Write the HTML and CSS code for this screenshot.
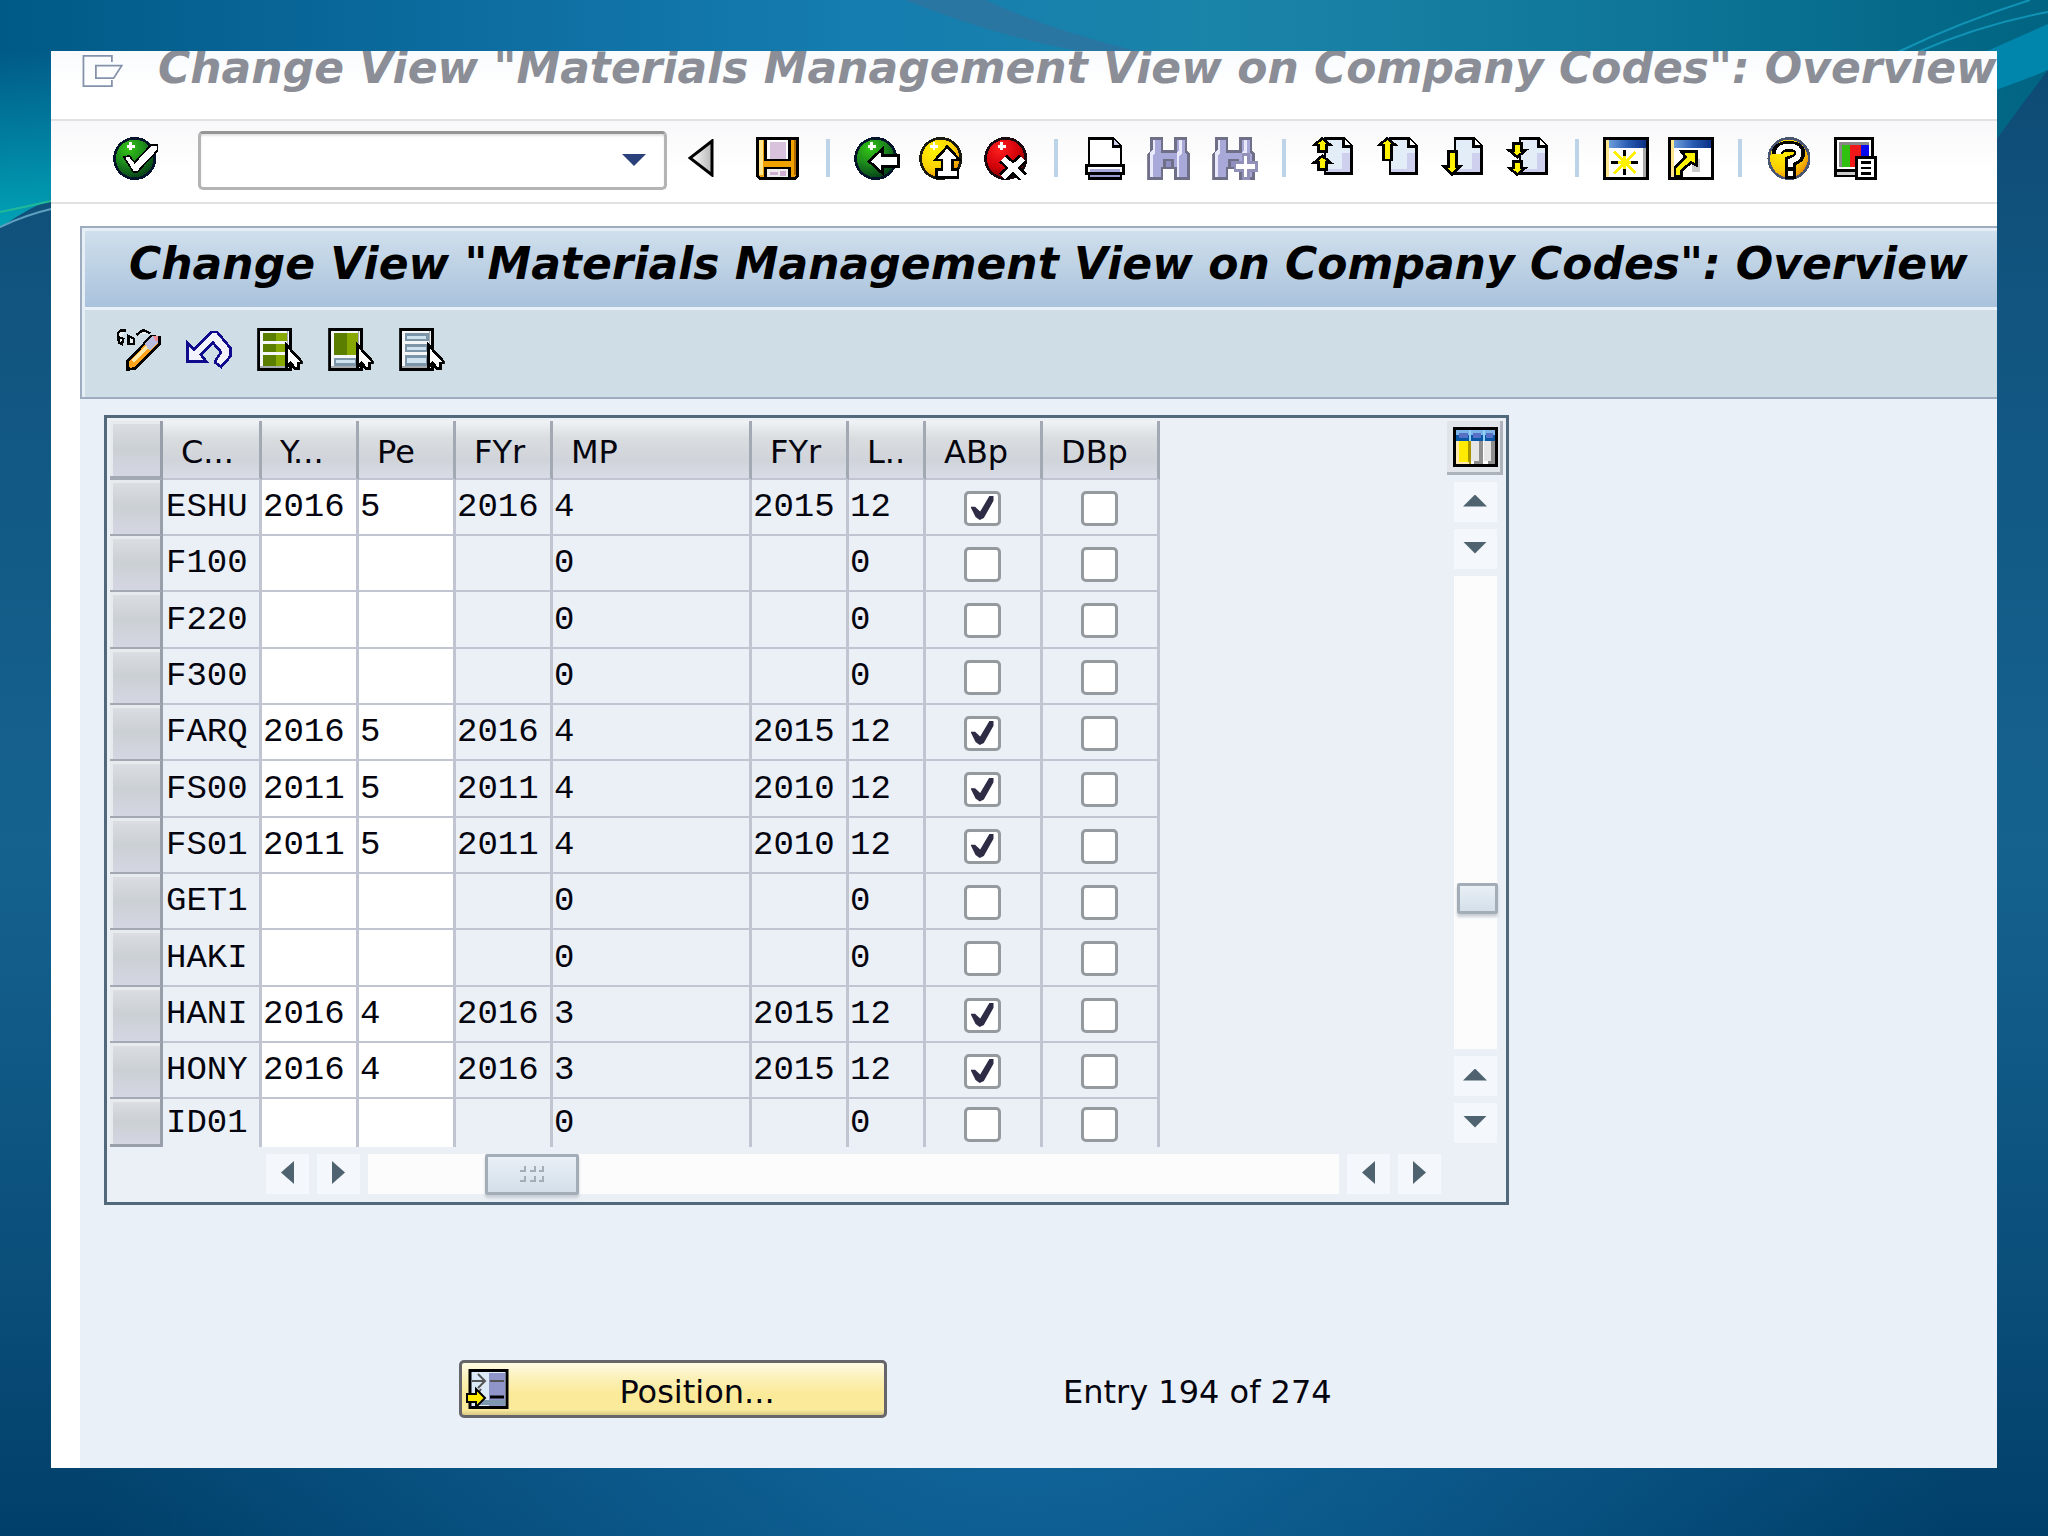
FILE: index.html
```html
<!DOCTYPE html>
<html lang="en">
<head>
<meta charset="utf-8">
<title>Change View "Materials Management View on Company Codes": Overview</title>
<link rel="stylesheet" href="styles.css">
</head>
<body>
<svg class="backdrop" viewBox="0 0 2048 1536" preserveAspectRatio="none" aria-hidden="true">
  <defs>
    <linearGradient id="sky" x1="0" y1="0" x2="1" y2="0"><stop offset="0" stop-color="#005a87"/><stop offset=".25" stop-color="#0e6ea2"/><stop offset=".42" stop-color="#157db0"/><stop offset=".6" stop-color="#1a84a8"/><stop offset=".8" stop-color="#0f7699"/><stop offset="1" stop-color="#006482"/></linearGradient>
    <linearGradient id="teal" gradientUnits="userSpaceOnUse" x1="0" y1="52" x2="0" y2="228"><stop offset="0" stop-color="#00a3b6" stop-opacity="0"/><stop offset="1" stop-color="#00a3b6"/></linearGradient>
    <linearGradient id="sea" x1="0" y1="0" x2="0" y2="1"><stop offset="0" stop-color="#0d4870"/><stop offset=".2" stop-color="#115580"/><stop offset=".55" stop-color="#15628f"/><stop offset=".85" stop-color="#0a4d79"/><stop offset="1" stop-color="#003f69"/></linearGradient>
    <radialGradient id="floor" gradientUnits="userSpaceOnUse" cx="1024" cy="1300" r="960"><stop offset="0" stop-color="#1269a0"/><stop offset="1" stop-color="#1269a0" stop-opacity="0"/></radialGradient>
  </defs>
  <rect width="2048" height="1536" fill="url(#sea)"/>
  <rect y="300" width="2048" height="1236" fill="url(#floor)"/>
  <path d="M0 0H2048V70Q2010 120 1960 190H60Q30 200 0 228Z" fill="url(#sky)"/>
  <path d="M0 52H60V196Q30 206 0 228Z" fill="url(#teal)"/>
  <path d="M905 0H985Q1050 30 1140 52H1085Q1000 38 905 0Z" fill="#2a76a2"/>
  <path d="M2048 24Q2000 45 1985 52V100L1996 90Q2025 80 2048 70Z" fill="#0086ac"/>
  <g fill="none">
    <path d="M0 212Q25 207 55 200" stroke="#22b999" stroke-width="2"/>
    <path d="M0 227Q25 215 55 208" stroke="#5e9fc0" stroke-width="2"/>
    <path d="M1898 52Q1960 22 2030 0M1918 52Q1980 25 2048 12" stroke="#1093b5" stroke-width="2"/>
  </g>
</svg>

<!-- Pixel icons, drawn on a 17 x 16 grid -->
<svg class="sprite" aria-hidden="true">
  <defs>
    <radialGradient id="g-green" cx=".35" cy=".25" r=".8"><stop offset="0" stop-color="#34c414"/><stop offset=".45" stop-color="#1e8f1c"/><stop offset="1" stop-color="#033a17"/></radialGradient>
    <radialGradient id="g-yellow" cx=".35" cy=".3" r=".8"><stop offset="0" stop-color="#fff200"/><stop offset=".6" stop-color="#fbd000"/><stop offset="1" stop-color="#e87800"/></radialGradient>
    <radialGradient id="g-red" cx=".35" cy=".25" r=".8"><stop offset="0" stop-color="#ff2020"/><stop offset=".6" stop-color="#d00008"/><stop offset="1" stop-color="#700000"/></radialGradient>
    <linearGradient id="g-blue"><stop offset="0" stop-color="#6fa0dc"/><stop offset=".5" stop-color="#2a5fb4"/><stop offset="1" stop-color="#0a2f86"/></linearGradient>
    <linearGradient id="g-grey"><stop offset="0" stop-color="#fff"/><stop offset="1" stop-color="#b8b8b8"/></linearGradient>
  </defs>
  <symbol id="page" viewBox="0 0 17 16"><path d="M5.500.5h7l3 3v10h-10z" fill="#e2edf7" stroke="#000"/><path d="M6 12h6V6h3v7H6z" fill="#cfd0ee"/><path d="M12.500.5v3h3" fill="#fff" stroke="#000"/></symbol>
  <symbol id="cursor" viewBox="0 0 17 16"><path d="M11 6.500v8l1.500-1.500 1.500 2h1.500v-2h1.500z" fill="#fff" stroke="#000"/></symbol>
  <symbol id="sheet" viewBox="0 0 17 16"><path d="M.5.5h12v15h-12z" fill="#f4f6f7" stroke="#000"/><path d="M11.500 1v14H1v-1h10V1z" fill="#a4aab0"/></symbol>
  <symbol id="binoc" viewBox="0 0 17 16"><path d="M1.500.5h4v5h5v-5h4v5l1 1v9h-5v-4h-5v4h-5v-9l1-1z" fill="#a9a9d9" stroke="#706f88"/><path d="M2 1h1v5l-1 1v8H1V6l1-1zM12 1h1v5l-1 1v8h-1V6l1-1z" fill="#e9e9fb"/><path d="M6.500 8.500h3v3h-3z" fill="#8f8fc4" stroke="#706f88"/></symbol>
</svg>

<main class="window">
  <div class="caption">
    <svg class="exit-icon" viewBox="0 0 46 36" aria-hidden="true"><path d="M33 8V1H1v34h32v-7M15 12h29l-9 14H15zM15 12v14" fill="none" stroke="#8492ab" stroke-width="2"/></svg>
    <span class="heading muted">Change View "Materials Management View on Company Codes": Overview</span>
  </div>

  <nav class="toolbar" aria-label="Standard toolbar">
    <button class="icon ok" aria-label="Enter"><svg viewBox="0 0 17 16"><ellipse cx="8" cy="8" rx="7.500" ry="7.500" fill="url(#g-green)" stroke="#04142b"/><path d="M5 3h1V2h1v1h1v1H7v1H6V4H5z" fill="#fff"/><path d="M4 7.500l2-.5 2 2.500L14 3h2.500v2L9 13H7.500z" fill="#fff" stroke="#000" stroke-width=".6"/></svg></button>
    <div class="command">
      <input type="text" aria-label="Command">
      <button aria-label="Command history"><i class="tri down navy"></i></button>
    </div>
    <button class="back" aria-label="Collapse command field"><svg viewBox="0 0 26 38"><path d="M24 2v34L2 19z" fill="url(#g-grey)" stroke="#000" stroke-width="3"/></svg></button>
    <button class="icon" aria-label="Save"><svg viewBox="0 0 17 16"><path d="M.5.5h15v14l-1 1h-13l-1-1z" fill="#f0a200" stroke="#000"/><path d="M1 1h1.500v13H1z" fill="#ffe58c"/><path d="M14 1h1v13h-1z" fill="#b06a00"/><path d="M3.500.5h9v8h-9z" fill="#fff" stroke="#000"/><path d="M5 2h6v6H5z" fill="#d8c2dc"/><path d="M3.500 11.500h9v4h-9z" fill="#eee" stroke="#000"/><path d="M5 13h3v1H5zM9 12.500h2v2H9z" fill="#cfaed2"/></svg></button>
    <span class="sep"></span>
    <div class="group">
      <button class="icon" aria-label="Back"><svg viewBox="0 0 17 16"><circle cx="8" cy="8" r="7.500" fill="url(#g-green)" stroke="#04142b"/><path d="M5 3h1V2h1v1h1v1H7v1H6V4H5z" fill="#fff"/><path d="M5.500 9l5-4.500v2.500h6v4h-6v2.500z" fill="#fff" stroke="#000"/></svg></button>
      <button class="icon" aria-label="Exit"><svg viewBox="0 0 17 16"><circle cx="8" cy="8" r="7.500" fill="url(#g-yellow)" stroke="#1b1a10"/><path d="M4 3h1V2h1v1h1v1H6v1H5V4H4z" fill="#fff"/><path d="M10.500 3.500l4.500 5h-2.500v3.500h2v3h-8v-3h2V8.500H6z" fill="#fff" stroke="#000"/></svg></button>
      <button class="icon" aria-label="Cancel"><svg viewBox="0 0 17 16"><circle cx="8" cy="8" r="7.500" fill="url(#g-red)" stroke="#1b0a10"/><path d="M5 3h1V2h1v1h1v1H7v1H6V4H5z" fill="#fff"/><path d="M7 8l7.500 7M14.500 8L7 15" stroke="#000" stroke-width="4"/><path d="M7 8l7.500 7M14.500 8L7 15" stroke="#fff" stroke-width="2.200"/></svg></button>
    </div>
    <span class="sep"></span>
    <div class="group">
      <button class="icon" aria-label="Print"><svg viewBox="0 0 17 16"><path d="M2.500 10.500v-10h9l3 3v7" fill="#fff" stroke="#000"/><path d="M11.500.5v3h3" fill="#cfd0ee" stroke="#000"/><path d="M1.500 10.500h14v3h-14z" fill="#fff" stroke="#000"/><path d="M3 12h11v1H3z" fill="#a9a9d9"/><path d="M2.500 13.500h12v2h-12z" fill="#9c9cd0" stroke="#000"/></svg></button>
      <button class="icon" aria-label="Find"><svg viewBox="0 0 17 16"><use href="#binoc"/></svg></button>
      <button class="icon" aria-label="Find next"><svg viewBox="0 0 17 16"><use href="#binoc"/><path d="M11.500 6.500h2v3h3v3h-3v3h-2v-3h-3v-3h3z" fill="#fff" stroke="#9090b8"/></svg></button>
    </div>
    <span class="sep"></span>
    <div class="group">
      <button class="icon" aria-label="First page"><svg viewBox="0 0 17 16"><use href="#page"/><path d="M4.500.5l3 2.500H6v2.500H3V3H1.500zM4.500 7l3 2.500H6V12H3V9.500H1.500z" fill="#fff200" stroke="#000"/></svg></button>
      <button class="icon" aria-label="Previous page"><svg viewBox="0 0 17 16"><use href="#page"/><path d="M4.500.5l3 2.500H6v5.500H3V3H1.500z" fill="#fff200" stroke="#000"/></svg></button>
      <button class="icon" aria-label="Next page"><svg viewBox="0 0 17 16"><use href="#page"/><path d="M4.500 14l3-3H6V5.500H3V11H1.500z" fill="#fff200" stroke="#000"/></svg></button>
      <button class="icon" aria-label="Last page"><svg viewBox="0 0 17 16"><use href="#page"/><path d="M4.500 7.500l3-2.500H6V2.500H3V5H1.500zM4.500 14l3-2.500H6V9H3v2.500H1.500z" fill="#fff200" stroke="#000"/></svg></button>
    </div>
    <span class="sep"></span>
    <div class="group">
      <button class="icon" aria-label="New session"><svg viewBox="0 0 17 16"><path d="M.5.5h16v15H.5z" fill="#fff" stroke="#000"/><path d="M2 1h14v3H2z" fill="url(#g-blue)"/><path d="M1 1h1v14H1z" fill="#ffe58c"/><path d="M15 4h1v11h-1z" fill="#aaa"/><path d="M8 5v9M3 9.500h10M4 5.500l8 8M12 5.500l-8 8" stroke="#000"/><path d="M8 7v5M5.500 9.500h5M4 5.500l8 8M12 5.500l-8 8" stroke="#fff200"/></svg></button>
      <button class="icon" aria-label="Create shortcut"><svg viewBox="0 0 17 16"><path d="M.5.5h16v15H.5z" fill="#fff" stroke="#000"/><path d="M2 1h14v3H2z" fill="url(#g-blue)"/><path d="M1 1h1v14H1z" fill="#ffe58c"/><path d="M9 8h3v5H9z" fill="#ccc"/><path d="M2.500 14.500v-3l4-4-1.500-2h5.500v5l-2-1-3.500 3v2z" fill="#fff200" stroke="#000"/></svg></button>
    </div>
    <span class="sep"></span>
    <div class="group">
      <button class="icon" aria-label="Help"><svg viewBox="0 0 17 16"><circle cx="8.500" cy="8" r="7.500" fill="url(#g-yellow)" stroke="#4a5572"/><path d="M4 6.500Q4 3.500 8.500 3.500T12.500 6.500Q12.500 8 9 9V11.500" fill="none" stroke="#000" stroke-width="4"/><path d="M7 11.500h4v4H7z" fill="#000"/><path d="M4.500 6.500Q4.500 3.500 8.500 3.500T12 6.500Q12 8 9 9V11" fill="none" stroke="#fff" stroke-width="2"/><path d="M8 12.500h2v2H8z" fill="#fff"/></svg></button>
      <button class="icon" aria-label="Customize local layout"><svg viewBox="0 0 17 16"><path d="M1.500.5h14v12h-14z" fill="#fff" stroke="#000"/><path d="M3 2h11v9H3z" fill="#888"/><path d="M4 3h3v8H4z" fill="#30c010"/><path d="M7 3h4v8H7z" fill="#f01818"/><path d="M11 3h3v8h-3z" fill="#0808f0"/><path d="M1.500 12.500h9v2h-9z" fill="#ccc" stroke="#000"/><path d="M9.500 7.500h7v8h-7z" fill="#fff" stroke="#000"/><path d="M11 9.500h4M11 11.500h4M11 13.500h4" stroke="#000"/></svg></button>
    </div>
  </nav>

  <section class="content">
    <header class="panel">
      <h1 class="heading">Change View "Materials Management View on Company Codes": Overview</h1>
      <div class="actions">
        <button class="icon" aria-label="Display or change"><svg viewBox="0 0 17 16"><path d="M1 5V2l1-1h2M5 6V3l2 1v2zM1.500 3.500v2l1 .5.500-2zM8 2.500l2-1.500h1l2 1" fill="#e8eef2" stroke="#000" stroke-width=".9"/><path d="M4.500 15.500v-3l9-9.500 3 .500v2.500l-9 9z" fill="#ffa41c" stroke="#000"/><path d="M6 12l7-7 1 1-7 7z" fill="#ffe9a8"/><path d="M11 6l3-3 2 .500v2l-3 3z" fill="#b9bde0"/><path d="M14 3h2v2h-1z" fill="#f08c94"/><path d="M4 13l2 2-2 1z" fill="#000"/></svg></button>
        <button class="icon" aria-label="Undo change"><svg viewBox="0 0 17 16"><path d="M.5 5.500v7h7l-2-2.500 4.500-4.500 3 3.500-2 3v1l2 1.500 3.500-4v-3l-5-6h-2l-6.500 6.500z" fill="#f2f2fc" stroke="#100a8c"/></svg></button>
        <button class="icon" aria-label="Select all"><svg viewBox="0 0 17 16"><use href="#sheet"/><path d="M2 2h9v3H2zM2 6h9v3H2zM2 10h9v4H2z" fill="#5c7e00"/><path d="M7 2h4v3H7zM7 6h4v3H7zM7 10h4v4H7z" fill="#86a800"/><use href="#cursor"/></svg></button>
        <button class="icon" aria-label="Select block"><svg viewBox="0 0 17 16"><use href="#sheet"/><path d="M2 2h9v8H2z" fill="#5c7e00"/><path d="M7 2h4v8H7z" fill="#86a800"/><path d="M2.500 11.500h8v2h-8z" fill="#cfe2f0" stroke="#7c95a8"/><use href="#cursor"/></svg></button>
        <button class="icon" aria-label="Deselect all"><svg viewBox="0 0 17 16"><use href="#sheet"/><path d="M2.500 2.500h8v2h-8zM2.500 6.500h8v2h-8zM2.500 10.500h8v3h-8z" fill="#cfe2f0" stroke="#7c95a8"/><use href="#cursor"/></svg></button>
      </div>
    </header>

    <div class="grid">
      <table>
        <colgroup><col class="c-sel"><col class="c-code"><col class="c-year"><col class="c-year"><col class="c-year"><col class="c-mp"><col class="c-year"><col class="c-last"><col class="c-flag"><col class="c-flag"></colgroup>
        <thead><tr><td class="sel"></td><th>C...</th><th>Y...</th><th>Pe</th><th>FYr</th><th>MP</th><th>FYr</th><th>L..</th><th>ABp</th><th>DBp</th></tr></thead>
        <tbody>
          <tr><td class="sel"></td><td class="code">ESHU</td><td class="edit"><input aria-label="Year" value="2016"></td><td class="edit"><input aria-label="Period" value="5"></td><td>2016</td><td>4</td><td>2015</td><td>12</td><td class="flag"><input type="checkbox" aria-label="ABp" checked></td><td class="flag"><input type="checkbox" aria-label="DBp"></td></tr>
          <tr><td class="sel"></td><td class="code">F100</td><td class="edit"><input aria-label="Year"></td><td class="edit"><input aria-label="Period"></td><td></td><td>0</td><td></td><td>0</td><td class="flag"><input type="checkbox" aria-label="ABp"></td><td class="flag"><input type="checkbox" aria-label="DBp"></td></tr>
          <tr><td class="sel"></td><td class="code">F220</td><td class="edit"><input aria-label="Year"></td><td class="edit"><input aria-label="Period"></td><td></td><td>0</td><td></td><td>0</td><td class="flag"><input type="checkbox" aria-label="ABp"></td><td class="flag"><input type="checkbox" aria-label="DBp"></td></tr>
          <tr><td class="sel"></td><td class="code">F300</td><td class="edit"><input aria-label="Year"></td><td class="edit"><input aria-label="Period"></td><td></td><td>0</td><td></td><td>0</td><td class="flag"><input type="checkbox" aria-label="ABp"></td><td class="flag"><input type="checkbox" aria-label="DBp"></td></tr>
          <tr><td class="sel"></td><td class="code">FARQ</td><td class="edit"><input aria-label="Year" value="2016"></td><td class="edit"><input aria-label="Period" value="5"></td><td>2016</td><td>4</td><td>2015</td><td>12</td><td class="flag"><input type="checkbox" aria-label="ABp" checked></td><td class="flag"><input type="checkbox" aria-label="DBp"></td></tr>
          <tr><td class="sel"></td><td class="code">FS00</td><td class="edit"><input aria-label="Year" value="2011"></td><td class="edit"><input aria-label="Period" value="5"></td><td>2011</td><td>4</td><td>2010</td><td>12</td><td class="flag"><input type="checkbox" aria-label="ABp" checked></td><td class="flag"><input type="checkbox" aria-label="DBp"></td></tr>
          <tr><td class="sel"></td><td class="code">FS01</td><td class="edit"><input aria-label="Year" value="2011"></td><td class="edit"><input aria-label="Period" value="5"></td><td>2011</td><td>4</td><td>2010</td><td>12</td><td class="flag"><input type="checkbox" aria-label="ABp" checked></td><td class="flag"><input type="checkbox" aria-label="DBp"></td></tr>
          <tr><td class="sel"></td><td class="code">GET1</td><td class="edit"><input aria-label="Year"></td><td class="edit"><input aria-label="Period"></td><td></td><td>0</td><td></td><td>0</td><td class="flag"><input type="checkbox" aria-label="ABp"></td><td class="flag"><input type="checkbox" aria-label="DBp"></td></tr>
          <tr><td class="sel"></td><td class="code">HAKI</td><td class="edit"><input aria-label="Year"></td><td class="edit"><input aria-label="Period"></td><td></td><td>0</td><td></td><td>0</td><td class="flag"><input type="checkbox" aria-label="ABp"></td><td class="flag"><input type="checkbox" aria-label="DBp"></td></tr>
          <tr><td class="sel"></td><td class="code">HANI</td><td class="edit"><input aria-label="Year" value="2016"></td><td class="edit"><input aria-label="Period" value="4"></td><td>2016</td><td>3</td><td>2015</td><td>12</td><td class="flag"><input type="checkbox" aria-label="ABp" checked></td><td class="flag"><input type="checkbox" aria-label="DBp"></td></tr>
          <tr><td class="sel"></td><td class="code">HONY</td><td class="edit"><input aria-label="Year" value="2016"></td><td class="edit"><input aria-label="Period" value="4"></td><td>2016</td><td>3</td><td>2015</td><td>12</td><td class="flag"><input type="checkbox" aria-label="ABp" checked></td><td class="flag"><input type="checkbox" aria-label="DBp"></td></tr>
          <tr><td class="sel"></td><td class="code">ID01</td><td class="edit"><input aria-label="Year"></td><td class="edit"><input aria-label="Period"></td><td></td><td>0</td><td></td><td>0</td><td class="flag"><input type="checkbox" aria-label="ABp"></td><td class="flag"><input type="checkbox" aria-label="DBp"></td></tr>
        </tbody>
      </table>

      <div class="vbar">
        <button class="config" aria-label="Configure columns"><svg viewBox="0 0 45 40"><path d="M0 0h45v40H0z" fill="#000"/><path d="M3 3h39v34H3z" fill="#fff"/><path d="M3 3h39v8H3z" fill="#7db4e8"/><path d="M3 8h39v6H3z" fill="#0a57a8"/><path d="M6 6h9v5H6zM20 6h8v5h-8zM33 6h7v5h-7z" fill="#5570c4"/><path d="M16 3h2v11h-2zM30 3h2v11h-2z" fill="#8fd0f4"/><path d="M3 14h15v23H3z" fill="#a89400"/><path d="M3 14h3v23H3zM3 35h13v2H3z" fill="#ffe9b0"/><path d="M6 14h9v21H6z" fill="#ffea00"/><path d="M21 14h9v23h-9zM35 14h7v23h-7z" fill="#8e8e8e"/><path d="M18 14h8v20h-8zM31 14h7v20h-7z" fill="#e6e6e6"/></svg></button>
        <button class="step" aria-label="Scroll up"><i class="tri up"></i></button>
        <button class="step" aria-label="Scroll down"><i class="tri down"></i></button>
        <div class="track"><div class="thumb"></div></div>
        <button class="step" aria-label="Page up"><i class="tri up"></i></button>
        <button class="step" aria-label="Page down"><i class="tri down"></i></button>
      </div>

      <div class="hbar">
        <button class="step" aria-label="Scroll left"><i class="tri left"></i></button>
        <button class="step" aria-label="Scroll right"><i class="tri right"></i></button>
        <div class="track"><div class="thumb"><svg viewBox="0 0 24 17" aria-hidden="true"><path d="M0 5h5V0M10 5h5V0M19 5h4V0M0 15h5v-5M10 15h5v-5M19 15h4v-5" fill="none" stroke="#a3adb6" stroke-width="2"/></svg></div></div>
        <button class="step" aria-label="Page left"><i class="tri left"></i></button>
        <button class="step" aria-label="Page right"><i class="tri right"></i></button>
      </div>
    </div>

    <footer class="position">
      <button class="position-button"><svg viewBox="0 0 44 40" aria-hidden="true"><path d="M4 1.500h37v37H4z" fill="#dceaf8" stroke="#000" stroke-width="3"/><path d="M23 4h16v33H23z" fill="#8f95c8"/><path d="M10 36h29v-5H10z" fill="#7e98b0"/><path d="M24 12h14" stroke="#555" stroke-width="2"/><path d="M24 28h14" stroke="#000" stroke-width="3"/><path d="M6 12h12M12 5l7 7-7 7M15 20l-5 7" fill="none" stroke="#555" stroke-width="2"/><path d="M1 25h9v-5l9 9-9 9v-5H1z" fill="#ffea00" stroke="#000" stroke-width="2"/></svg><span>Position...</span></button>
      <span class="entry">Entry 194 of 274</span>
    </footer>
  </section>
</main>
</body>
</html>
```
FILE: styles.css
```css
* { box-sizing: border-box; }

body {
  margin: 0;
  min-height: 100vh;
  padding: 51px 51px 68px;
  display: flex;
  background: #115580;
  color: #05050f;
  font: 32px/40px "DejaVu Sans", Verdana, sans-serif;
}

.backdrop {
  position: absolute;
  inset: 0;
  width: 100%;
  height: 100%;
  z-index: -1;
}

.sprite { position: absolute; width: 0; height: 0; }

button {
  margin: 0;
  padding: 0;
  border: 0;
  background: none;
  color: inherit;
  font: inherit;
}

svg { display: block; }

.window {
  flex: 1;
  min-width: 0;
  display: flex;
  flex-direction: column;
  overflow: hidden;
  background: #fff;
}

.heading {
  margin: 0;
  font: italic bold 44px/52px "DejaVu Sans", Verdana, sans-serif;
  white-space: nowrap;
  color: #000;
}
.heading.muted { color: #8b8e96; }

/* Caption and standard toolbar */
.caption {
  height: 70px;
  padding-left: 29px;
  display: flex;
  align-items: flex-start;
  gap: 32px;
  background: linear-gradient(#f8fafc, #fff 50%);
  border-bottom: 2px solid #e2e2e4;
}
.caption .heading { margin-top: -9px; }
.exit-icon { width: 46px; height: 32px; margin-top: 4px; flex: none; }

.toolbar {
  height: 83px;
  padding: 0 0 7px 62px;
  display: flex;
  align-items: center;
  background: linear-gradient(#f8f8fa, #fff 60%);
  border-bottom: 2px solid #e2e2e4;
}

.icon { width: 46px; height: 43px; flex: none; }
.icon svg { width: 46px; height: 43px; shape-rendering: crispEdges; }

.command {
  width: 469px;
  height: 59px;
  margin: 4px 21px 0 39px;
  display: flex;
  border: 3px solid #b4b4b4;
  border-top-color: #959595;
  border-radius: 5px;
  background: #fff;
  box-shadow: inset 0 2px 2px #e4e4e4;
}
.command input {
  flex: 1;
  min-width: 0;
  padding: 0 8px;
  border: 0;
  background: none;
  font: inherit;
}
.command button { width: 60px; display: grid; place-items: center; }

.back { width: 26px; height: 38px; margin-right: 42px; }
.back svg { width: 26px; height: 38px; }

.sep { width: 4px; height: 38px; margin: 0 24px; background: #bdd3e8; }
.group { display: flex; gap: 19px; }

.tri { display: block; background: #4f626f; }
.tri.up, .tri.down { width: 24px; height: 12px; }
.tri.left, .tri.right { width: 13px; height: 23px; }
.tri.up { clip-path: polygon(50% 0, 100% 100%, 0 100%); }
.tri.down { clip-path: polygon(0 0, 100% 0, 50% 100%); }
.tri.left { clip-path: polygon(100% 0, 100% 100%, 0 50%); }
.tri.right { clip-path: polygon(0 0, 100% 50%, 0 100%); }
.tri.navy { background: #2b417c; }

/* Work area */
.content {
  flex: 1;
  margin: 22px 0 0 29px;
  background: #eaf0f7;
}

.panel {
  border: solid #9dadbf;
  border-width: 2px 0 2px 2px;
  padding-left: 3px;
  background: #cfdde7;
  box-shadow: inset 3px 3px #e6eef6;
}
.panel .heading {
  height: 82px;
  padding: 7px 0 0 44px;
  background: linear-gradient(#cfdfec, #a9c2dc);
  border-top: 3px solid #e6eef6;
  border-bottom: 3px solid #e9f1f8;
}
.actions { height: 87px; padding: 18px 0 0 30px; display: flex; gap: 25px; }

.grid {
  width: calc(100% - 50px);
  max-width: 1405px;
  margin: 16px 0 0 24px;
  padding: 3px 3px 8px;
  display: grid;
  grid-template-columns: 1fr 56px;
  row-gap: 7px;
  border: 3px solid #52697b;
  background: #ebf0f7;
}

table {
  width: 1050px;
  table-layout: fixed;
  border-collapse: separate;
  border-spacing: 0;
}
.c-sel { width: 53px; }
.c-code { width: 99px; }
.c-year { width: 97px; }
.c-mp { width: 199px; }
.c-last { width: 77px; }
.c-flag { width: 117px; }

th, td { padding: 0; border: solid #c0c5d1; border-width: 0 3px 2px 0; text-align: left; }
th {
  height: 59px;
  padding: 4px 0 0 18px;
  border-right-color: #a3a9b3;
  background: linear-gradient(#f0f3f5, #d9dde0 30%, #d0d4da 70%, #d9dce6);
  font-weight: 400;
}
td {
  height: 56px;
  padding-left: 1px;
  font: 34px/40px "Liberation Mono", "Courier New", monospace;
  white-space: nowrap;
}
td.code { padding-left: 3px; }
tbody tr:nth-child(3n) td { height: 57px; }
tbody tr:last-child td { height: 48px; border-bottom-width: 0; }

td.sel {
  border-right: 3px solid #989eaa;
  border-bottom: 2px solid #a3a9b3;
  background: linear-gradient(#dcdfe3, #cbd0d4 50%, #d4d6e2);
  box-shadow: inset 3px 3px #e8ebee;
}
thead td.sel { border-bottom-width: 4px; }
tbody tr:last-child td.sel { border-bottom: 3px solid #989eaa; }

td.edit { background: #fff; padding: 0; }
.edit input {
  display: block;
  width: 100%;
  padding: 0 0 0 1px;
  border: 0;
  background: none;
  color: inherit;
  font: inherit;
}

td.flag { padding: 0 2px 0 0; }
.flag input {
  appearance: none;
  display: grid;
  place-items: center;
  width: 37px;
  height: 35px;
  margin: 2px auto 0;
  border: 3px solid #949a9d;
  border-radius: 5px;
  background: #fff;
}
.flag input:checked::before {
  content: "";
  width: 23px;
  height: 24px;
  background: #2e2c45;
  clip-path: polygon(0 45%, 20% 45%, 42% 65%, 82% 0, 100% 0, 100% 20%, 58% 92%, 40% 100%, 22% 88%);
}

/* Scroll bars */
.step {
  flex: none;
  width: 43px;
  height: 40px;
  display: grid;
  place-items: center;
  padding-bottom: 3px;
  background: #f4f8fd;
}
.track { position: relative; flex: 1; background: #fcfcfd; }
.thumb {
  position: absolute;
  display: grid;
  place-items: center;
  border: 3px solid #a3adb8;
  border-radius: 2px;
  background: linear-gradient(#e9f0f6, #d3dfe9);
  box-shadow: 0 3px 3px #c9ced4;
}

.vbar { display: flex; flex-direction: column; align-items: center; gap: 7px; padding-bottom: 4px; }
.vbar .track { width: 43px; }
.vbar .thumb { top: 65%; left: 3px; width: 41px; height: 31px; }

.config {
  width: 56px;
  height: 54px;
  padding-left: 3px;
  display: grid;
  place-items: center;
  border: solid #adb3ba;
  border-width: 0 3px 3px 0;
  background: #e1e4e8;
}
.config svg { width: 45px; height: 40px; }

.hbar { display: flex; gap: 8px; padding: 0 6px 0 156px; }
.hbar .thumb { top: 0; left: 12%; width: 94px; height: 41px; }
.hbar .thumb svg { width: 24px; height: 17px; }

/* Position */
.position {
  margin-top: 155px;
  padding-left: 379px;
  display: flex;
  align-items: center;
  gap: 176px;
}
.position-button {
  width: 428px;
  height: 58px;
  padding-left: 4px;
  display: flex;
  align-items: center;
  border: 3px solid #66666a;
  border-radius: 5px;
  background: linear-gradient(#fffbe4, #fbf0b8 30%, #fbea98 60%, #faea9c 90%, #d8c884);
}
.position-button svg { width: 44px; height: 40px; flex: none; }
.position-button span { flex: 1; padding-top: 5px; text-align: center; }
.entry { padding-top: 5px; }
```
